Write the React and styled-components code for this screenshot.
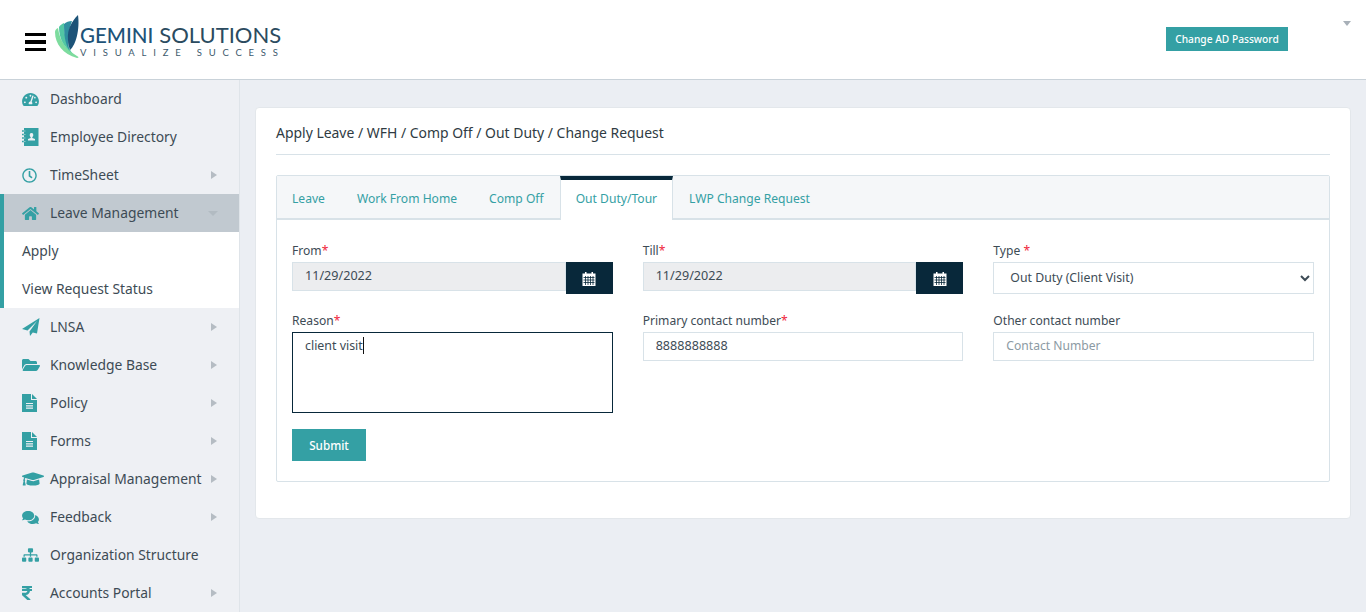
import styled, { createGlobalStyle } from "styled-components";
import {
  FaTachometerAlt,
  FaRegClock,
  FaHome,
  FaFolderOpen,
  FaGraduationCap,
  FaComments,
  FaSitemap,
  FaRupeeSign,
} from "react-icons/fa";

const GlobalStyle = createGlobalStyle`
  * { box-sizing: border-box; }
  html, body { margin: 0; height: 100%; overflow: hidden; }
  body {
    font-family: "Noto Sans", "Open Sans", sans-serif;
    font-size: 13.85px;
    color: #37474f;
    background: #ebeef3;
  }
`;

const TEAL = "#34a0a4";
const NAVY = "#08283a";
const LINE = "#d8e2e8";

const DirectoryIcon = () => (
  <svg viewBox="0 0 17 18">
    <path d="M2 0H16.500V18H2Z" fill="currentColor" />
    <path d="M0 3H3.500M0 6.500H3.500M0 10H3.500M0 13.500H3.500" stroke="currentColor" strokeWidth="1.400" />
    <path d="M1.500 3H3.500M1.500 6.500H3.500M1.500 10H3.500M1.500 13.500H3.500" stroke="#eef0f4" strokeWidth="0.500" />
    <path d="M9.500 5a1.800 1.800 0 0 1 1.800 2c0 1-.5 1.800-1 2.200v.8l2.700 1V12.500H6v-1.500l2.700-1v-.8c-.5-.4-1-1.200-1-2.200a1.800 1.800 0 0 1 1.800-2Z" fill="#eef0f4" />
  </svg>
);

const PlaneIcon = () => (
  <svg viewBox="0 0 18 18">
    <path d="M17.500 0 0 11l5.500 1.500L15 3 7.500 13.500 8 18l2.800-3.600 4.200 1.200Z" fill="currentColor" />
  </svg>
);

const DocIcon = () => (
  <svg viewBox="0 0 15 18">
    <path d="M0 0H9V6H15V18H0Z" fill="currentColor" />
    <path d="M10 0 15 5H10Z" fill="currentColor" />
    <path d="M4 9.500H11M4 11.800H11M4 14.100H11" stroke="#eef0f4" strokeWidth="1.200" />
  </svg>
);

const navItems = [
  { label: "Dashboard", icon: FaTachometerAlt, w: 17, h: 15 },
  { label: "Employee Directory", icon: DirectoryIcon, w: 17, h: 18 },
  { label: "TimeSheet", icon: FaRegClock, w: 15, h: 15, arrow: "right" },
  {
    label: "Leave Management",
    icon: FaHome,
    w: 17,
    h: 15,
    arrow: "down",
    open: true,
    children: ["Apply", "View Request Status"],
  },
  { label: "LNSA", icon: PlaneIcon, w: 18, h: 18, arrow: "right" },
  { label: "Knowledge Base", icon: FaFolderOpen, w: 18, h: 16, arrow: "right" },
  { label: "Policy", icon: DocIcon, w: 15, h: 18, arrow: "right" },
  { label: "Forms", icon: DocIcon, w: 15, h: 18, arrow: "right" },
  { label: "Appraisal Management", icon: FaGraduationCap, w: 22, h: 18, arrow: "right" },
  { label: "Feedback", icon: FaComments, w: 17, h: 15, arrow: "right" },
  { label: "Organization Structure", icon: FaSitemap, w: 17, h: 14 },
  { label: "Accounts Portal", icon: FaRupeeSign, w: 10, h: 16, arrow: "right" },
];

const tabs = ["Leave", "Work From Home", "Comp Off", "Out Duty/Tour", "LWP Change Request"];

const Feather = () => (
  <svg width="25" height="44" viewBox="0 0 25 44">
    <path d="M0 17C0 29 8 39 22 43 24 43 24 42 22 41 14 36 5 29 3 13 1 14 0 15 0 17Z" fill="#7ddc9e" />
    <path d="M4 12C4 24 9 32 17 38 12 30 9 21 9 8 7 9 5 10 4 12Z" fill="#52c7a4" />
    <path d="M9 9C9 20 10 28 14 35 13 26 13 17 17 6 14 6 11 7 9 9Z" fill="#2f8f9f" />
    <path d="M23 0C17 6 12 14 13 25 13 29 14 32 15 35 21 30 25 14 23 0Z" fill="#1d5378" />
  </svg>
);

const CalendarIcon = () => (
  <svg width="14" height="15" viewBox="0 0 14 15">
    <path d="M0.500 2.500H3V1h1.500v1.500h5V1H11v1.500h2.500V15H0.500Z" fill="#fff" />
    <path d="M1.500 6.500h11M1.500 9h11M1.500 11.500h11M3.500 5v9M6 5v9M8.500 5v9M11 5v9" stroke="#08283a" strokeWidth="0.800" fill="none" />
  </svg>
);

const Page = styled.div`
  height: 100vh;
  display: flex;
  flex-direction: column;
`;

const Header = styled.header`
  flex: 0 0 80px;
  display: flex;
  align-items: center;
  padding: 0 15px 0 25px;
  background: #fff;
  border-bottom: 1px solid #c9d2d9;
`;

const Burger = styled.div`
  width: 21px;
  margin-right: 9px;
  margin-top: 5px;
  display: flex;
  flex-direction: column;
  gap: 4px;
  span {
    height: 3.5px;
    background: #000;
  }
`;

const Logo = styled.div`
  display: flex;
  align-items: flex-start;
  height: 44px;
  margin-top: -5px;
`;

const LogoText = styled.div`
  font-family: "Lato", sans-serif;
  padding-top: 9px;
  color: #2b4b60;
`;

const LogoName = styled.div`
  display: flex;
  align-items: baseline;
  font-size: 22px;
  line-height: 22px;
  font-weight: 400;
  white-space: nowrap;
  b {
    font-size: 20.500px;
    font-weight: 500;
    color: #1d5378;
    margin-right: 6px;
  }
`;

const LogoTag = styled.div`
  font-size: 9.500px;
  line-height: 11px;
  letter-spacing: 6.800px;
  margin-top: 1px;
  white-space: nowrap;
  color: #3d5a6c;
`;

const PasswordButton = styled.button`
  margin-left: auto;
  margin-top: -2px;
  width: 122px;
  height: 24px;
  padding: 0;
  border: 0;
  background: ${TEAL};
  color: #fff;
  font: 500 10.200px "Noto Sans", sans-serif;
`;

const UserCaret = styled.span`
  margin-left: 55px;
  margin-bottom: 32px;
  border-top: 5px solid #a8b0b8;
  border-left: 4px solid transparent;
  border-right: 4px solid transparent;
`;

const Body = styled.div`
  flex: 1;
  min-height: 0;
  display: flex;
`;

const Sidebar = styled.nav`
  flex: 0 0 240px;
  background: #eef0f4;
  border-right: 1px solid #dfe4e9;
`;

const NavRow = styled.div`
  height: 38px;
  display: flex;
  align-items: center;
  padding-left: ${(p) => (p.$open ? "18px" : "22px")};
  padding-right: 22px;
  color: #3d4b55;
  background: ${(p) => (p.$open ? "#c1c9d0" : "transparent")};
  border-left: ${(p) => (p.$open ? `4px solid ${TEAL}` : "0")};
`;

const NavIcon = styled.span`
  flex: 0 0 28px;
  display: flex;
  align-items: center;
  color: ${TEAL};
  svg {
    width: ${(p) => p.$w}px;
    height: ${(p) => p.$h}px;
  }
`;

const NavLabel = styled.span`
  flex: 1;
  margin-bottom: 2px;
  white-space: nowrap;
`;

const Arrow = styled.span`
  ${(p) =>
    p.$dir === "down"
      ? `
    margin-right: -1px;
    border-top: 5px solid #b2bbc2;
    border-left: 5px solid transparent;
    border-right: 5px solid transparent;
  `
      : `
    border-left: 6px solid #b5bcc3;
    border-top: 4.500px solid transparent;
    border-bottom: 4.500px solid transparent;
  `}
`;

const SubMenu = styled.div`
  background: #fff;
  border-left: 4px solid ${TEAL};
`;

const SubRow = styled.div`
  height: 38px;
  display: flex;
  align-items: center;
  padding: 0 0 2px 18px;
  color: #3d4b55;
`;

const Main = styled.main`
  flex: 1;
  padding: 27px 15px 0;
`;

const Card = styled.section`
  height: 412px;
  padding: 0 20px;
  background: #fff;
  border: 1px solid #e3e7eb;
  border-radius: 4px;
`;

const CardTitle = styled.h1`
  height: 47px;
  margin: 0 0 20px;
  display: flex;
  align-items: center;
  padding-top: 2px;
  font-size: 13.950px;
  font-weight: 400;
  color: #2f3b43;
  border-bottom: 1px solid ${LINE};
`;

const TabPanel = styled.div`
  border: 1px solid ${LINE};
  border-radius: 2px;
`;

const TabBar = styled.div`
  height: 44px;
  display: flex;
  background: #f5f7f9;
  border-bottom: 2px solid ${LINE};
`;

const Tab = styled.div`
  display: flex;
  align-items: center;
  padding: ${(p) => (p.$active ? "0 15px 4px" : "2px 16px 0")};
  font-size: 12.100px;
  color: ${TEAL};
  &:first-child {
    padding-left: 15px;
  }
  ${(p) =>
    p.$active &&
    `
    height: 44px;
    background: #fff;
    border-top: 4px solid ${NAVY};
    border-left: 1px solid ${LINE};
    border-right: 1px solid ${LINE};
  `}
`;

const FormGrid = styled.form`
  padding: 20px 15px 20px;
  display: grid;
  grid-template-columns: repeat(3, 1fr);
  column-gap: 30px;
  row-gap: 16px;
  align-items: start;
`;

const Field = styled.div`
  min-width: 0;
`;

const Label = styled.label`
  display: block;
  height: 22px;
  line-height: 21px;
  font-size: 12.100px;
  color: #3d4b55;
  em {
    color: #f0243c;
    font-style: normal;
  }
`;

const DateGroup = styled.div`
  display: flex;
  align-items: flex-start;
`;

const TextInput = styled.input`
  display: block;
  width: 100%;
  min-width: 0;
  height: 29px;
  padding: 0 12px 2px;
  border: 1px solid ${LINE};
  border-radius: 0;
  outline: 0;
  background: ${(p) => (p.readOnly ? "#ecedef" : "#fff")};
  font: ${(p) => (p.$digits ? "12.600px" : "12.100px")} "Noto Sans", sans-serif;
  color: #3d4b55;
  &::placeholder {
    color: #8c9aa3;
    opacity: 1;
  }
`;

const DateButton = styled.button`
  flex: 0 0 47px;
  height: 32px;
  display: flex;
  align-items: center;
  justify-content: center;
  border: 0;
  padding: 0;
  background: ${NAVY};
`;

const TypeSelect = styled.select`
  display: block;
  width: 100%;
  height: 32px;
  padding: 0 12px 2px;
  border: 1px solid ${LINE};
  border-radius: 0;
  background: #fff;
  font: 12.300px "Noto Sans", sans-serif;
  color: #3d4b55;
`;

const ReasonBox = styled.div`
  height: 81px;
  padding: 3px 12px;
  border: 1px solid ${NAVY};
  font-size: 12.400px;
  line-height: 20px;
  color: #3d4b55;
`;

const TextCaret = styled.span`
  display: inline-block;
  width: 1px;
  height: 17px;
  vertical-align: -4px;
  background: #111;
`;

const SubmitButton = styled.button`
  grid-column: 1;
  width: 74px;
  height: 32px;
  padding: 0;
  border: 0;
  background: ${TEAL};
  color: #fff;
  font: 500 11.700px "Noto Sans", sans-serif;
`;

const App = () => {
  return (
    <Page>
      <GlobalStyle />
      <Header>
        <Burger>
          <span />
          <span />
          <span />
        </Burger>
        <Logo>
          <Feather />
          <LogoText>
            <LogoName>
              <b>GEMINI</b>SOLUTIONS
            </LogoName>
            <LogoTag>VISUALIZE SUCCESS</LogoTag>
          </LogoText>
        </Logo>
        <PasswordButton>Change AD Password</PasswordButton>
        <UserCaret />
      </Header>
      <Body>
        <Sidebar>
          {navItems.map((item) => (
            <div key={item.label}>
              <NavRow $open={item.open}>
                <NavIcon $w={item.w} $h={item.h}>
                  <item.icon />
                </NavIcon>
                <NavLabel>{item.label}</NavLabel>
                {item.arrow && <Arrow $dir={item.arrow} />}
              </NavRow>
              {item.children && (
                <SubMenu>
                  {item.children.map((child) => (
                    <SubRow key={child}>{child}</SubRow>
                  ))}
                </SubMenu>
              )}
            </div>
          ))}
        </Sidebar>
        <Main>
          <Card>
            <CardTitle>Apply Leave / WFH / Comp Off / Out Duty / Change Request</CardTitle>
            <TabPanel>
              <TabBar>
                {tabs.map((tab) => (
                  <Tab key={tab} $active={tab === "Out Duty/Tour"}>
                    {tab}
                  </Tab>
                ))}
              </TabBar>
              <FormGrid>
                <Field>
                  <Label>
                    From<em>*</em>
                  </Label>
                  <DateGroup>
                    <TextInput $digits readOnly value="11/29/2022" />
                    <DateButton type="button">
                      <CalendarIcon />
                    </DateButton>
                  </DateGroup>
                </Field>
                <Field>
                  <Label>
                    Till<em>*</em>
                  </Label>
                  <DateGroup>
                    <TextInput $digits readOnly value="11/29/2022" />
                    <DateButton type="button">
                      <CalendarIcon />
                    </DateButton>
                  </DateGroup>
                </Field>
                <Field>
                  <Label>
                    Type <em>*</em>
                  </Label>
                  <TypeSelect defaultValue="client">
                    <option value="client">Out Duty (Client Visit)</option>
                    <option value="tour">Tour</option>
                  </TypeSelect>
                </Field>
                <Field>
                  <Label>
                    Reason<em>*</em>
                  </Label>
                  <ReasonBox>
                    client visit
                    <TextCaret />
                  </ReasonBox>
                </Field>
                <Field>
                  <Label>
                    Primary contact number<em>*</em>
                  </Label>
                  <TextInput $digits defaultValue="8888888888" />
                </Field>
                <Field>
                  <Label>Other contact number</Label>
                  <TextInput placeholder="Contact Number" />
                </Field>
                <SubmitButton type="button">Submit</SubmitButton>
              </FormGrid>
            </TabPanel>
          </Card>
        </Main>
      </Body>
    </Page>
  );
};

export default App;
